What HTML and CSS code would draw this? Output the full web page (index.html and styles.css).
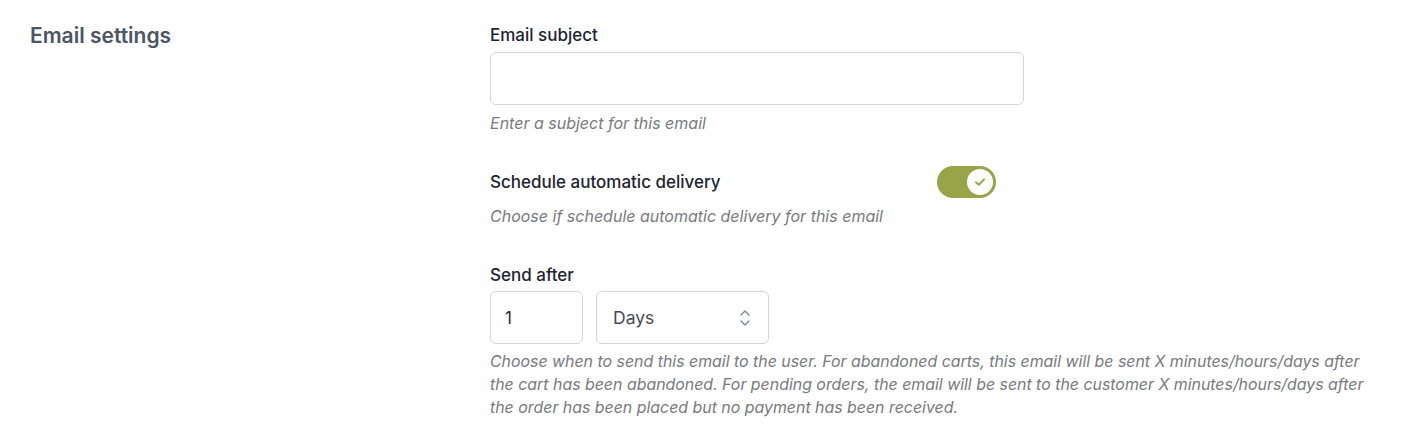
FILE: index.html
```html
<!DOCTYPE html>
<html>
<head>
<meta charset="utf-8">
<link rel="stylesheet" href="styles.css">
</head>
<body>
<div class="section">
  <h2 class="section-title">Email settings</h2>
  <div class="fields">
    <div class="field">
      <label class="label">Email subject</label>
      <input class="text-input subject" type="text">
      <p class="help">Enter a subject for this email</p>
    </div>
    <div class="field field-toggle">
      <div class="toggle-row">
        <span class="label">Schedule automatic delivery</span>
        <span class="toggle">
          <span class="knob">
            <svg width="12" height="10" viewBox="0 0 12 10"><path d="M2 5.2 L4.8 7.8 L10 2.4" fill="none" stroke="#97a447" stroke-width="2" stroke-linecap="round" stroke-linejoin="round"/></svg>
          </span>
        </span>
      </div>
      <p class="help help-toggle">Choose if schedule automatic delivery for this email</p>
    </div>
    <div class="field field-send">
      <label class="label">Send after</label>
      <div class="send-row">
        <input class="text-input number" type="text" value="1">
        <div class="select">
          <span>Days</span>
          <svg width="12" height="20" viewBox="0 0 12 20"><path d="M2 7 L6 3 L10 7 M2 13 L6 17 L10 13" fill="none" stroke="#8a8f96" stroke-width="1.5" stroke-linecap="round" stroke-linejoin="round"/></svg>
        </div>
      </div>
      <p class="help help-long">Choose when to send this email to the user. For abandoned carts, this email will be sent X minutes/hours/days after the cart has been abandoned. For pending orders, the email will be sent to the customer X minutes/hours/days after the order has been placed but no payment has been received.</p>
    </div>
  </div>
</div>
</body>
</html>
```
FILE: styles.css
```css
html, body {
  margin: 0;
  padding: 0;
  background: #ffffff;
  font-family: Inter, "Noto Sans", "Liberation Sans", sans-serif;
}
.section {
  display: grid;
  grid-template-columns: 460px 1fr;
  padding: 24px 0 0 30px;
}
.section-title {
  margin: 0;
  font-size: 21px;
  line-height: 24px;
  font-weight: 600;
  color: #4b5563;
}
.fields {
  display: flex;
  flex-direction: column;
}
.field {
  display: flex;
  flex-direction: column;
  align-items: flex-start;
}
.label {
  font-size: 17px;
  line-height: 22px;
  font-weight: 500;
  color: #1e2430;
}
.text-input {
  box-sizing: border-box;
  height: 53px;
  border: 1px solid #d3d5d8;
  border-radius: 6px;
  background: #fff;
  font-family: inherit;
  font-size: 17px;
  color: #2a2f37;
  outline: none;
}
.subject {
  width: 534px;
  margin-top: 6px;
}
.help {
  margin: 0;
  font-size: 16px;
  line-height: 20px;
  font-style: italic;
  color: #777a7e;
}
.subject + .help {
  margin-top: 8px;
}
.field-toggle {
  margin-top: 33px;
}
.toggle-row {
  width: 506px;
  height: 32px;
  display: flex;
  align-items: center;
  justify-content: space-between;
}
.toggle {
  width: 59px;
  height: 32px;
  border-radius: 16px;
  background: #97a447;
  display: flex;
  align-items: center;
  justify-content: flex-end;
  padding-right: 3px;
  box-sizing: border-box;
}
.knob {
  width: 26px;
  height: 26px;
  border-radius: 50%;
  background: #fff;
  display: flex;
  align-items: center;
  justify-content: center;
}
.help-toggle {
  margin-top: 8px;
}
.field-send {
  margin-top: 38px;
}
.send-row {
  display: flex;
  gap: 13px;
  margin-top: 5px;
}
.number {
  width: 93px;
  padding: 0 14px;
}
.select {
  box-sizing: border-box;
  width: 173px;
  height: 53px;
  border: 1px solid #d3d5d8;
  border-radius: 6px;
  display: flex;
  align-items: center;
  justify-content: space-between;
  padding: 0 17px 0 16px;
  font-size: 17.5px;
  color: #474c54;
}
.help-long {
  margin-top: 6px;
  width: 885px;
  font-size: 15.9px;
  line-height: 23px;
}
```
